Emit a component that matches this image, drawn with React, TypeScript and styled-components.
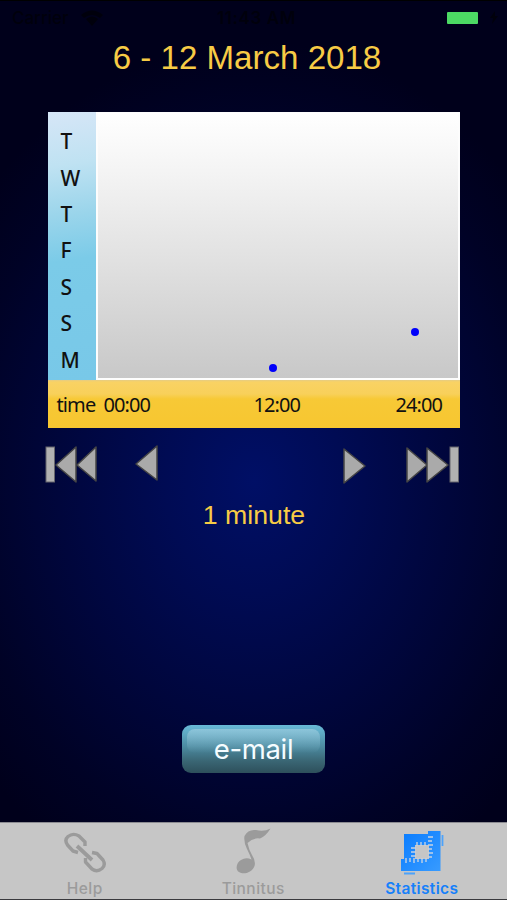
import React from "react";
import styled, { createGlobalStyle } from "styled-components";

const GlobalStyle = createGlobalStyle`
  * { box-sizing: border-box; }
  body { margin: 0; background: #00001a; }
`;

const Screen = styled.main`
  width: 507px;
  height: 900px;
  overflow: hidden;
  display: flex;
  flex-direction: column;
  align-items: center;
  background: radial-gradient(ellipse 355px 440px at 254px 480px, #000f66 0%, #000b54 25%, #00063c 55%, #000226 82%, #00001b 100%);
  border-top: 1px solid #000;
  border-bottom: 1px solid #3a3a3e;
  font-family: "Liberation Sans", Arial, sans-serif;
`;

const StatusBar = styled.header`
  width: 100%;
  height: 33px;
  display: grid;
  grid-template-columns: 1fr auto 1fr;
  align-items: center;
  padding: 0 9px 0 12px;
  color: #00000c;
  font: 500 17px Inter, sans-serif;
`;

const ClockText = styled.span`
  padding-left: 3px;
  font-weight: 600;
  letter-spacing: 0.6px;
`;

const StatusGroup = styled.div<{ $end?: boolean }>`
  display: flex;
  align-items: center;
  gap: 11px;
  justify-content: ${(p) => (p.$end ? "flex-end" : "flex-start")};
`;

const Battery = styled.span`
  width: 31px;
  height: 12px;
  margin-right: 1px;
  border-radius: 1px;
  background: #4cd964;
`;

const Title = styled.h1`
  margin: 5px 0 0;
  padding-right: 13px;
  height: 38px;
  line-height: 38px;
  font-size: 33.1px;
  font-weight: 400;
  color: #f7cb45;
  white-space: nowrap;
`;

const Chart = styled.section`
  width: 412px;
  height: 316px;
  margin-top: 35px;
  display: grid;
  grid-template: 268px 48px / 48px 364px;
  font: 400 20px "Noto Sans", sans-serif;
  color: #111;
`;

const Days = styled.div`
  display: grid;
  grid-template-rows: repeat(7, 36.4px);
  align-items: center;
  align-content: start;
  padding: 11px 0 0 13px;
  font-size: 21px;
  font-weight: 500;
  background: linear-gradient(172deg, #d6e6f7 0%, #bfe2f2 20%, #9bd5eb 38%, #7bcbe8 55%, #78c8e8 100%);
`;

const Plot = styled.div`
  position: relative;
  border: 2px solid #fdfdfd;
  border-top-width: 1px;
  background: linear-gradient(#fff 0%, #f5f5f5 20%, #c8c8c8 100%);
`;

const Point = styled.i<{ $x: number; $y: number }>`
  position: absolute;
  left: ${(p) => p.$x}px;
  top: ${(p) => p.$y}px;
  width: 8px;
  height: 8px;
  border-radius: 50%;
  background: #0000fa;
`;

const TimeAxis = styled.div`
  grid-column: 1 / -1;
  display: grid;
  grid-template-columns: 47px 150px 142px 1fr;
  align-items: center;
  padding: 0 0 0 9px;
  letter-spacing: -0.9px;
  background: linear-gradient(#e5cc83 0, #f9d264 2px, #f8d05a 14px, #f7c936 19px, #f7c630 100%);
`;

const Controls = styled.nav`
  width: 416px;
  height: 44px;
  margin: 15px 1px 0 0;
  display: flex;
  align-items: center;
`;

const Control = styled.button<{ $before?: number }>`
  padding: 0;
  border: 0;
  background: none;
  height: 44px;
  margin-left: ${(p) => p.$before ?? 0}px;
  svg { display: block; }
`;

const Duration = styled.p`
  margin: 11px 0 0;
  padding-left: 1px;
  height: 34px;
  line-height: 34px;
  font-size: 26.7px;
  color: #f7cb45;
`;

const EmailButton = styled.button`
  position: relative;
  width: 143px;
  height: 48px;
  margin: 193px 0 0;
  padding: 0;
  border: 0;
  border-radius: 9px;
  color: #f5fcff;
  font: 400 27.5px Inter, sans-serif;
  letter-spacing: -0.35px;
  background: linear-gradient(#68b9d7 0, #62afca 12%, #4c8ba1 45%, #3a6674 75%, #2d4f5b 100%);
  &::before {
    content: "";
    position: absolute;
    inset: 4px 5px 20px;
    border-radius: 8px;
    background: linear-gradient(rgba(180, 215, 230, 0.5), rgba(180, 215, 230, 0));
  }
`;

const ButtonText = styled.span`
  position: relative;
`;

const TabBar = styled.footer`
  width: 100%;
  height: 77px;
  margin-top: auto;
  display: grid;
  grid-template-columns: repeat(3, 168.5px);
  border-top: 1px solid #8b8b91;
  background: #c6c6c6;
`;

const Tab = styled.button<{ $active?: boolean }>`
  display: flex;
  flex-direction: column;
  align-items: center;
  padding: 4px 0 0 1px;
  border: 0;
  background: none;
  color: ${(p) => (p.$active ? "#1680fa" : "#9b9b9b")};
  font: ${(p) => (p.$active ? 600 : 500)} 15.5px/18px Inter, sans-serif;
  letter-spacing: ${(p) => (p.$active ? "0.35px" : "0.45px")};
  svg { display: block; margin-bottom: 3px; }
`;

const WifiIcon = () => (
  <svg width="24" height="16" viewBox="0 0 24 16" fill="currentColor">
    <path d="M1 5Q12-4 23 5L20 8Q12 2 4 8ZM6 9Q12 4 18 9L12 16Z" />
  </svg>
);

const BoltIcon = () => (
  <svg width="8" height="13" viewBox="0 0 8 13" fill="currentColor">
    <path d="M5 0 0 7h3l-1 6 6-8H5Z" />
  </svg>
);

type Shape = { width: number; paths: string[]; bar?: number };

const shapes: Record<string, Shape> = {
  first: { width: 54, bar: 1, paths: ["M11 22 31 4v35Z", "M32 22 51 4v34Z"] },
  previous: { width: 26, paths: ["M2 21 23 3v34Z"] },
  next: { width: 26, paths: ["M2 6v34L23 23Z"] },
  last: { width: 56, bar: 44, paths: ["M1 5v34L21 22Z", "M21 5v34L42 22Z"] },
};

const TransportIcon = ({ kind }: { kind: string }) => {
  const { width, paths, bar } = shapes[kind];
  return (
    <svg width={width} height="44" viewBox={`0 0 ${width} 44`}>
      <g stroke="#454545" strokeWidth="1.5" strokeLinejoin="round">
        {paths.map((d) => <path key={d} d={d} fill="#aaa" />)}
      </g>
      {bar !== undefined && <rect x={bar} y="4" width="8.5" height="35" fill="#b1b1b1" stroke="#65656c" />}
    </svg>
  );
};

const LinkIcon = () => (
  <svg width="44" height="50" viewBox="0 0 44 50" fill="none" stroke="currentColor" strokeWidth="3.4" strokeLinejoin="round">
    <path d="M15 25.5 10 24 4.5 18Q1 13 5 9.500Q10 5.500 16 9L22 15V19" />
    <path d="M14 19 29 33" strokeWidth="3.8" />
    <path d="M29 25.500 34 26.500 40 33Q43 38 39 41.500Q34 45.500 29 42L22.500 35V31" />
  </svg>
);

const NoteIcon = () => (
  <svg width="44" height="50" viewBox="0 0 44 50" fill="currentColor">
    <path d="M13.500 9Q17 2 25 3Q33 5 39.500 1.500Q35 9 29 11.500Q22 10.500 16.500 16Q18 23 21 28Q25 34 23.500 39C21 46 12 48 8 45C3.500 42 6 35 10 33Q15 30 20.500 32.500Q19 28 16 22Q12.500 15 13.500 9Z" />
  </svg>
);

const RulersIcon = () => (
  <svg width="46" height="50" viewBox="0 0 46 50">
    <defs>
      <linearGradient id="ruler-blue" x2="1" y2="1">
        <stop stopColor="#087cff" />
        <stop offset="1" stopColor="#389bff" />
      </linearGradient>
    </defs>
    <path fill="url(#ruler-blue)" fillRule="evenodd" d="M5 7H29V4H41.500V44H2V32H5ZM16 18V32H30V18Z" />
    <path d="M18 15v4M22 15v4M26 15v4M12 21h5M12 25h5M12 29h5M29 10h5M29 14h4M29 18h5M29 22h4M29 26h5M29 30h4M7 31v5M11 31v4M15 31v5M19 31v4M23 31v5M27 31v4" stroke="#c6d2e2" strokeWidth="1.4" />
    <path d="M43.500 8v11M5 46.5h11" stroke="#4ca2fa" strokeWidth="1.8" />
  </svg>
);

const days = ["T", "W", "T", "F", "S", "S", "M"];

export default function App() {
  return (
    <>
      <GlobalStyle />
      <Screen>
        <StatusBar>
          <StatusGroup>Carrier <WifiIcon /></StatusGroup>
          <ClockText>11:43 AM</ClockText>
          <StatusGroup $end><Battery /><BoltIcon /></StatusGroup>
        </StatusBar>
        <Title>6 - 12 March 2018</Title>
        <Chart>
          <Days>{days.map((day, i) => <span key={i}>{day}</span>)}</Days>
          <Plot>
            <Point $x={171} $y={251} />
            <Point $x={313} $y={215} />
          </Plot>
          <TimeAxis><span>time</span><span>00:00</span><span>12:00</span><span>24:00</span></TimeAxis>
        </Chart>
        <Controls>
          <Control aria-label="First week"><TransportIcon kind="first" /></Control>
          <Control aria-label="Previous week" $before={35}><TransportIcon kind="previous" /></Control>
          <Control aria-label="Next week" $before={182}><TransportIcon kind="next" /></Control>
          <Control aria-label="Last week" $before={38}><TransportIcon kind="last" /></Control>
        </Controls>
        <Duration>1 minute</Duration>
        <EmailButton><ButtonText>e-mail</ButtonText></EmailButton>
        <TabBar>
          <Tab><LinkIcon />Help</Tab>
          <Tab><NoteIcon />Tinnitus</Tab>
          <Tab $active><RulersIcon />Statistics</Tab>
        </TabBar>
      </Screen>
    </>
  );
}
